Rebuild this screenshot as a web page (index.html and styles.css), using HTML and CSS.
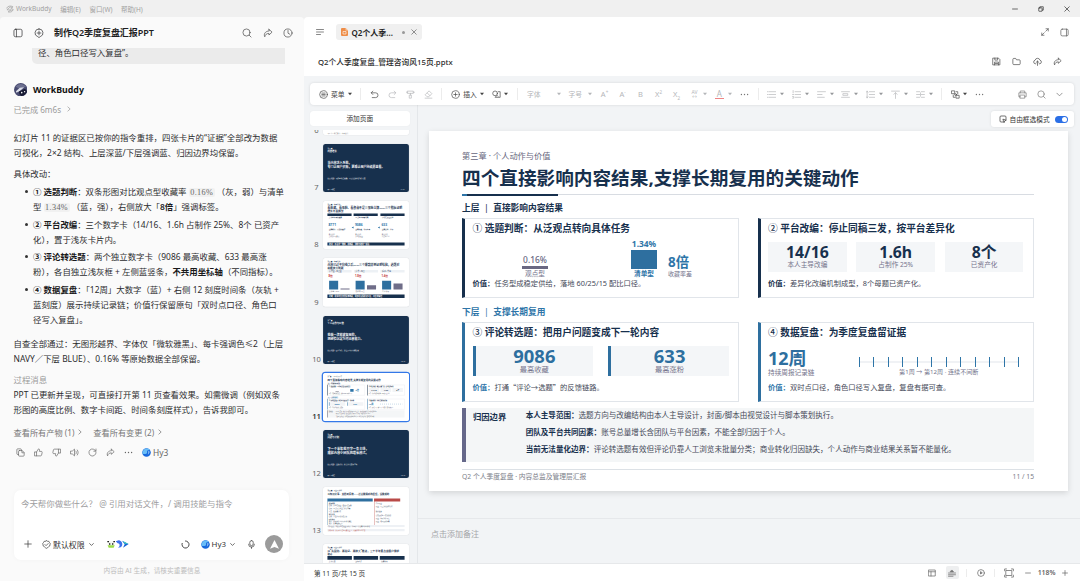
FILE: index.html
```html
<!DOCTYPE html>
<html lang="zh-CN">
<head>
<meta charset="utf-8">
<title>WorkBuddy</title>
<link rel="stylesheet" href="styles.css">
</head>
<body>
<svg class="defs" aria-hidden="true">
  <symbol id="i-side" viewBox="0 0 16 16"><rect x="1.5" y="2" width="13" height="12" rx="2.5"/><path d="M5.5 2v12"/></symbol>
  <symbol id="i-sider" viewBox="0 0 16 16"><rect x="1.5" y="2" width="13" height="12" rx="2.5"/><path d="M11.5 2v12"/></symbol>
  <symbol id="i-newchat" viewBox="0 0 16 16"><path d="M8 1.5a6.3 6.3 0 0 1 2 12.3L8 15.3l-2-1.5A6.3 6.3 0 0 1 8 1.5zM8 5v6M5 8h6"/></symbol>
  <symbol id="i-search" viewBox="0 0 16 16"><circle cx="7.2" cy="7.2" r="5.7"/><path d="M11.5 11.5l3 3"/></symbol>
  <symbol id="i-share" viewBox="0 0 16 16"><path d="M9.500 2l5 4.600-5 4.600V8.600C6 8.600 3.500 10.500 2.800 14 .8 9.500 3.500 5 9.500 4.700z"/></symbol>
  <symbol id="i-clock" viewBox="0 0 16 16"><circle cx="8" cy="8" r="6.500"/><path d="M8 4v4.300l3 1.700"/></symbol>
  <symbol id="i-chev" viewBox="0 0 16 16"><path d="M5 2.500l6 5.500-6 5.500"/></symbol>
  <symbol id="i-down" viewBox="0 0 16 16"><path d="M2 5l6 6 6-6"/></symbol>
  <symbol id="i-caret" viewBox="0 0 8 8"><path d="M0 1.500h8L4 6.500z" fill="currentColor" stroke="none"/></symbol>
  <symbol id="i-copy" viewBox="0 0 16 16"><path d="M4.500 11.500H3A1.500 1.500 0 0 1 1.500 10V3A1.500 1.500 0 0 1 3 1.500h5A1.500 1.500 0 0 1 9.500 3v1"/><path d="M6 4.500h5l3.500 3.500v5a1.500 1.500 0 0 1-1.500 1.500H6A1.500 1.500 0 0 1 4.500 13V6A1.500 1.500 0 0 1 6 4.500zM10.500 5v3.500H14"/></symbol>
  <symbol id="i-up" viewBox="0 0 16 16"><path d="M1.500 7h3v7h-3zM4.500 7L8 1.500c1.800 0 2.200 1.500 1.500 4.500H13c1 0 1.700.8 1.500 1.800l-1 4.700c-.2 1-.9 1.500-1.800 1.500H4.500"/></symbol>
  <symbol id="i-dn" viewBox="0 0 16 16"><path d="M14.500 9h-3V2h3zM11.500 9L8 14.500c-1.800 0-2.200-1.500-1.500-4.500H3c-1 0-1.700-.8-1.500-1.800l1-4.700C2.700 2.500 3.400 2 4.300 2h7.200"/></symbol>
  <symbol id="i-sound" viewBox="0 0 16 16"><path d="M1.500 5.500H4L8 2v12l-4-3.500H1.500zM10.500 5.500c1 1.500 1 3.500 0 5M13 3.500c2 2.700 2 6.300 0 9"/></symbol>
  <symbol id="i-retry" viewBox="0 0 16 16"><path d="M13.800 5.500A6.300 6.300 0 1 0 14.300 8M14.200 1.800v3.900h-3.900"/></symbol>
  <symbol id="i-dots" viewBox="0 0 16 16"><g fill="currentColor" stroke="none"><circle cx="2.500" cy="8" r="1.200"/><circle cx="8" cy="8" r="1.200"/><circle cx="13.500" cy="8" r="1.200"/></g></symbol>
  <symbol id="i-plus" viewBox="0 0 16 16"><path d="M8 1.500v13M1.500 8h13"/></symbol>
  <symbol id="i-minus" viewBox="0 0 16 16"><path d="M1.500 8h13"/></symbol>
  <symbol id="i-shield" viewBox="0 0 16 16"><path d="M8 1.200l1.900 1.100 2.300.1 1.100 2 1.400 1.900L14.200 8.500l-.6 2.300-2 1.200L10 13.700 8 14.800l-2-1.100L4.300 12l-2-1.200-.5-2.300L1.300 6.300l1.400-1.900 1.100-2 2.300-.1zM5.200 8l2 2 3.800-3.800"/></symbol>
  <symbol id="i-mic" viewBox="0 0 16 16"><rect x="5" y="1" width="6" height="9" rx="3"/><path d="M2.800 7.500a5.200 5.200 0 0 0 10.400 0M8 12.700V15"/></symbol>
  <symbol id="i-ring" viewBox="0 0 16 16"><path d="M8 1.700A6.300 6.300 0 1 1 2 6"/></symbol>
  <symbol id="i-x" viewBox="0 0 16 16"><path d="M2 2l12 12M14 2L2 14"/></symbol>
  <symbol id="i-restore" viewBox="0 0 16 16"><rect x="2" y="5" width="9" height="9" rx="1"/><path d="M5 5V2h9v9h-3"/></symbol>
  <symbol id="i-outline" viewBox="0 0 16 16"><path d="M1 3h14M1 8h14M1 13h8"/></symbol>
  <symbol id="i-expand" viewBox="0 0 16 16"><path d="M9.500 6.500l5-5M10 1.500h4.500V6M6.500 9.500l-5 5M1.500 10v4.500H6"/></symbol>
  <symbol id="i-save" viewBox="0 0 16 16"><path d="M2 2h9.500L14 4.500V14H2zM5 2v3.500h5V2M4.500 14V9h7v5M6 11.500h4"/></symbol>
  <symbol id="i-folder" viewBox="0 0 16 16"><path d="M1.500 4A1.500 1.500 0 0 1 3 2.500h3.500L8 5h5a1.500 1.500 0 0 1 1.500 1.500V12a1.500 1.500 0 0 1-1.500 1.500H3A1.500 1.500 0 0 1 1.500 12z"/></symbol>
  <symbol id="i-cloud" viewBox="0 0 16 16"><path d="M5 12H4a3.200 3.200 0 0 1-.3-6.300 4.500 4.500 0 0 1 8.700 0A3.200 3.200 0 0 1 12 12h-1M8 15V7.500M5.500 9.700L8 7.300l2.500 2.400"/></symbol>
  <symbol id="i-menu" viewBox="0 0 16 16"><circle cx="8" cy="8" r="6.800"/><path d="M5 5.500h6M5 8h6M5 10.500h6"/></symbol>
  <symbol id="i-undo" viewBox="0 0 16 16"><path d="M5 2L2 5l3 3M2.500 5H10a4 4 0 0 1 0 8.500H4"/></symbol>
  <symbol id="i-redo" viewBox="0 0 16 16"><path d="M11 2l3 3-3 3M13.500 5H6a4 4 0 0 0 0 8.500h6"/></symbol>
  <symbol id="i-paint" viewBox="0 0 16 16"><path d="M3 2h10v4H3zM13 4h2M1 4h2M8 6v3M6.500 9h3v5.500h-3z"/></symbol>
  <symbol id="i-erase" viewBox="0 0 16 16"><path d="M9.500 2L14 6.500 8.500 12H5.500L2.500 9zM6 5.500L10.500 10M2 14.500h12"/></symbol>
  <symbol id="i-add" viewBox="0 0 16 16"><circle cx="8" cy="8" r="6.800"/><path d="M8 5v6M5 8h6"/></symbol>
  <symbol id="i-shape" viewBox="0 0 16 16"><circle cx="5.500" cy="6" r="4.200"/><path d="M11 3h3.500v10h-9l3.500-3.500 1.500 1.500"/></symbol>
  <symbol id="i-list" viewBox="0 0 16 16"><path d="M0 3h2M4 3h12M0 8h2M4 8h12M0 13h2M4 13h12"/></symbol>
  <symbol id="i-num" viewBox="0 0 16 16"><path d="M2 1v4M1 8h2M1 11.500h2v3H1M5.500 3H16M5.500 8H16M5.500 13H16"/></symbol>
  <symbol id="i-left" viewBox="0 0 16 16"><path d="M1 3h14M1 8h8M1 13h12"/></symbol>
  <symbol id="i-center" viewBox="0 0 16 16"><path d="M1 3h14M4 6.500h8v3H4zM1 13h14"/></symbol>
  <symbol id="i-space" viewBox="0 0 16 16"><path d="M2 2v12M0.500 4L2 2l1.500 2M.5 12L2 14l1.500-2M6 3h10M6 8h10M6 13h10"/></symbol>
  <symbol id="i-top" viewBox="0 0 16 16"><path d="M1 2h14M8 5v10M5 7.500L8 5l3 2.500"/></symbol>
  <symbol id="i-cols" viewBox="0 0 16 16"><path d="M1 3h5.500M9.500 3H15M1 8h5.500M9.500 8H15M1 13h5.500M9.500 13H15M8 5v6"/></symbol>
  <symbol id="i-swap" viewBox="0 0 16 16"><path d="M1.500 1.500h5v5h-5zM9.500 9.500h5v5h-5zM9 3h3v4M4 9v4h3"/><circle cx="8" cy="8" r="1.600"/></symbol>
  <symbol id="i-print" viewBox="0 0 16 16"><path d="M4 5V1.800h8V5M4 12H1.500V5h13v7H12M4 9h8v5.500H4z"/></symbol>
  <symbol id="i-select" viewBox="0 0 16 16"><path d="M8 14H4a2 2 0 0 1-2-2V4a2 2 0 0 1 2-2h8a2 2 0 0 1 2 2v5M8.500 8.500l6 2-3 1.200-1.200 3z"/></symbol>
  <symbol id="i-layout" viewBox="0 0 16 16"><path d="M1.500 2h13v12h-13zM1.500 5.500h13M6 5.500V14"/></symbol>
  <symbol id="i-notes" viewBox="0 0 16 16"><path d="M1 8h14M1 11.500h14M1 14.500h9"/><path d="M5 5.500h6L8 2.500z" fill="currentColor"/></symbol>
  <symbol id="i-play" viewBox="0 0 16 16"><circle cx="8" cy="8" r="6.800"/><path d="M7 6v4l3-2z" fill="currentColor"/></symbol>
  <symbol id="i-fit" viewBox="0 0 16 16"><path d="M1 4.500V1.500h3M12 1.500h3v3M15 11.500v3h-3M4 14.500H1v-3M3.500 4h9v8h-9z"/></symbol>
  <symbol id="i-hy" viewBox="0 0 16 16"><circle cx="8" cy="8" r="7.600" fill="#1768dc" stroke="none"/><path d="M2 5C4 0 12-.5 14.500 4c-4-2-6 1-5.500 3.500S5 12 1 10C.3 8 1 6 2 5z" fill="#69bdf7" stroke="none"/><path d="M12 4.500c2 2 1.500 6-2 7.500 3-3 .5-5 2-7.500z" fill="#cdeaff" stroke="none"/></symbol>
</svg>

<header class="titlebar">
  <svg class="ic s8 logo" viewBox="0 0 16 16"><path d="M1.500 6C3 2 8 1 13.500 3M2.500 9l6-5 5 1.500-6 4zM5 14c3 1 8 0 9.500-5L9 11z"/></svg>
  <span class="brand">WorkBuddy</span><span>编辑(E)</span><span>窗口(W)</span><span>帮助(H)</span>
  <div class="win"><svg class="ic s6"><use href="#i-minus"/></svg><svg class="ic s6"><use href="#i-restore"/></svg><svg class="ic s6"><use href="#i-x"/></svg></div>
</header>

<div class="app">
<aside class="chat">
  <div class="chat-head">
    <svg class="ic s10"><use href="#i-side"/></svg><svg class="ic s10"><use href="#i-newchat"/></svg>
    <h1>制作Q2季度复盘汇报PPT</h1>
    <div class="head-tools"><svg class="ic s10"><use href="#i-search"/></svg><svg class="ic s10"><use href="#i-share"/></svg><svg class="ic s10"><use href="#i-clock"/></svg></div>
  </div>
  <div class="bubble">径、角色口径写入复盘”。</div>
  <div class="agent">
    <svg class="avatar" viewBox="0 0 28 28"><circle cx="14" cy="14" r="14" fill="#474a70"/><path d="M3 8C8 0 20 0 25 8L12 12z" fill="#6d7090"/><path d="M4 17l8-7 9-1-8 7-8 4z" fill="#dcdfea"/><path d="M11 17l12-5 4 5c-2 7-7 10-12 10-3-2-5-6-4-10z" fill="#171a33"/><circle cx="16" cy="20" r="1.600" fill="#fff"/><circle cx="22" cy="18" r="1.400" fill="#fff"/></svg>
    <b>WorkBuddy</b>
  </div>
  <div class="done">已完成 6m6s <svg class="ic s6"><use href="#i-chev"/></svg></div>
  <div class="msg">
    <p>幻灯片 11 的证据区已按你的指令重排，四张卡片的“证据”全部改为数据<br>可视化，2×2 结构、上层深蓝/下层强调蓝、归因边界均保留。</p>
    <p class="gap6">具体改动：</p>
    <ul>
      <li><b>① 选题判断</b>：双条形图对比观点型收藏率 <code>0.16%</code> （灰，弱）与清单<br>型 <code>1.34%</code> （蓝，强），右侧放大「<b>8倍</b>」强调标签。</li>
      <li><b>② 平台改编</b>：三个数字卡（14/16、1.6h 占制作 25%、8个 已资产<br>化），置于浅灰卡片内。</li>
      <li><b>③ 评论转选题</b>：两个独立数字卡（9086 最高收藏、633 最高涨<br>粉），各自独立浅灰框 + 左侧蓝竖条，<b>不共用坐标轴</b>（不同指标）。</li>
      <li><b>④ 数据复盘</b>：「12周」大数字（蓝）+ 右侧 12 刻度时间条（灰轨 +<br>蓝刻度）展示持续记录链；价值行保留原句「双时点口径、角色口<br>径写入复盘」。</li>
    </ul>
    <p class="gap9">自查全部通过：无图形越界、字体仅「微软雅黑」、每卡强调色≤2（上层<br>NAVY／下层 BLUE）、0.16% 等原始数据全部保留。</p>
    <p class="gap6 muted">过程消息</p>
    <p>PPT 已更新并呈现，可直接打开第 11 页查看效果。如需微调（例如双条<br>形图的高度比例、数字卡间距、时间条刻度样式），告诉我即可。</p>
  </div>
  <div class="links"><span>查看所有产物 (1) <svg class="ic s6"><use href="#i-chev"/></svg></span><span>查看所有变更 (2) <svg class="ic s6"><use href="#i-chev"/></svg></span></div>
  <div class="acts">
    <svg class="ic s9"><use href="#i-copy"/></svg><svg class="ic s9"><use href="#i-up"/></svg><svg class="ic s9"><use href="#i-dn"/></svg><svg class="ic s9"><use href="#i-sound"/></svg><svg class="ic s9"><use href="#i-retry"/></svg><svg class="ic s9"><use href="#i-share"/></svg><svg class="ic s9"><use href="#i-dots"/></svg>
    <span class="model"><svg class="ic s9"><use href="#i-hy"/></svg>Hy3</span>
  </div>
  <div class="composer">
    <div class="ph">今天帮你做些什么？ @ 引用对话文件，/ 调用技能与指令</div>
    <div class="comp-bar">
      <svg class="ic s8"><use href="#i-plus"/></svg>
      <span class="perm"><svg class="ic s9"><use href="#i-shield"/></svg>默认权限<svg class="ic s5"><use href="#i-down"/></svg></span>
      <svg class="skills" viewBox="0 0 66 24"><path d="M3 7c5-4 14-4 19 0l1 11H2z" fill="#f2f5ee"/><path d="M1 3h5v4H1zM19 3h5v4h-5z" fill="#222"/><path d="M6 10h4v4H6zM15 10h4v4h-4z" fill="#222"/><path d="M2 16h21l-3 7H5z" fill="#9adb48"/><path d="M26 4l9-3c11 0 15 17 6 21l-8 1c8-4 5-14-1-13z" fill="#3d72ec"/><path d="M45 2l20 10-17 11 5-10z" fill="#1764d8"/><path d="M48 3l16 9-11-1z" fill="#37cbbd"/></svg>
      <span class="push"></span>
      <svg class="ic s9 thick"><use href="#i-ring"/></svg>
      <span class="pick"><svg class="ic s9"><use href="#i-hy"/></svg>Hy3<svg class="ic s5"><use href="#i-down"/></svg></span>
      <svg class="ic s9 mic"><use href="#i-mic"/></svg>
      <span class="send"><svg viewBox="0 0 16 16"><path d="M8 1.500L14.500 14 8 11.500 1.500 14z" fill="#fff"/></svg></span>
    </div>
  </div>
  <div class="disclaimer">内容由 AI 生成，请核实重要信息</div>
</aside>

<main class="doc">
  <div class="tabs">
    <svg class="ic s8"><use href="#i-outline"/></svg>
    <div class="tab"><svg class="ppt" viewBox="0 0 14 16"><path d="M2 0h7l5 5v9a2 2 0 0 1-2 2H2a2 2 0 0 1-2-2V2a2 2 0 0 1 2-2z" fill="#ee8d48"/><path d="M9 0l5 5H9z" fill="#f8c79f"/><path d="M4 7h6v5H4z" fill="none" stroke="#fff" stroke-width="1.200"/></svg><b>Q2个人季...</b><i class="dot"></i><svg class="ic s6"><use href="#i-x"/></svg></div>
    <span class="push"></span>
    <svg class="ic s8"><use href="#i-expand"/></svg><svg class="ic s9"><use href="#i-sider"/></svg>
  </div>
  <div class="filebar">
    <span>Q2个人季度复盘_管理咨询风15页.pptx</span>
    <svg class="ic s9"><use href="#i-save"/></svg><svg class="ic s9"><use href="#i-folder"/></svg><svg class="ic s9"><use href="#i-cloud"/></svg><svg class="ic s9"><use href="#i-share"/></svg>
  </div>
  <div class="editor">
    <div class="toolbar">
      <span class="tg dark"><svg class="ic s9"><use href="#i-menu"/></svg><span class="tl">菜单</span><svg class="ic car"><use href="#i-caret"/></svg></span><i class="sep"></i>
      <span class="tg wide"><svg class="ic s9 dark"><use href="#i-undo"/></svg><svg class="ic s9"><use href="#i-redo"/></svg><svg class="ic s9"><use href="#i-paint"/></svg><svg class="ic s9"><use href="#i-erase"/></svg></span><i class="sep"></i>
      <span class="tg dark"><svg class="ic s9"><use href="#i-add"/></svg><span class="tl">插入</span><svg class="ic car"><use href="#i-caret"/></svg><svg class="ic s9 shp"><use href="#i-shape"/></svg><svg class="ic car"><use href="#i-caret"/></svg></span><i class="sep"></i>
      <span class="tg font"><span class="tl">字体</span><svg class="ic car"><use href="#i-caret"/></svg></span>
      <span class="tg size"><span class="tl">字号</span><svg class="ic car"><use href="#i-caret"/></svg></span>
      <span class="tg glyphs"><span>A<sup>+</sup></span><span>A<sup>-</sup></span><span>B</span><span>X<sup>2</sup></span><span>X<sub>2</sub></span></span>
      <span class="tg pair"><span class="av">AV<br>↔</span><svg class="ic car"><use href="#i-caret"/></svg></span>
      <span class="tg pair"><span class="fc">A</span><svg class="ic car"><use href="#i-caret"/></svg></span>
      <svg class="ic s9 mid more"><use href="#i-dots"/></svg><i class="sep"></i>
      <span class="tg paras">
        <span class="pp"><svg class="ic s9"><use href="#i-list"/></svg><svg class="ic car"><use href="#i-caret"/></svg></span>
        <span class="pp"><svg class="ic s9"><use href="#i-num"/></svg><svg class="ic car"><use href="#i-caret"/></svg></span>
        <span class="pp"><svg class="ic s9"><use href="#i-left"/></svg><svg class="ic car"><use href="#i-caret"/></svg></span>
        <span class="pp"><svg class="ic s9"><use href="#i-center"/></svg><svg class="ic car"><use href="#i-caret"/></svg></span>
        <span class="pp"><svg class="ic s9"><use href="#i-space"/></svg><svg class="ic car"><use href="#i-caret"/></svg></span>
        <span class="pp"><svg class="ic s9"><use href="#i-top"/></svg><svg class="ic car"><use href="#i-caret"/></svg></span>
        <span class="pp"><svg class="ic s9"><use href="#i-cols"/></svg><svg class="ic car"><use href="#i-caret"/></svg></span>
      </span><i class="sep"></i>
      <span class="tg dark swap"><svg class="ic s9"><use href="#i-swap"/></svg><svg class="ic car"><use href="#i-caret"/></svg></span>
      <svg class="ic s9 mid"><use href="#i-dots"/></svg>
      <span class="push"></span>
      <span class="tg tools mid"><svg class="ic s9"><use href="#i-print"/></svg><svg class="ic s9"><use href="#i-search"/></svg><svg class="ic s7"><use href="#i-down"/></svg></span>
    </div>
    <div class="work">
      <nav class="pages">
        <div class="addpage">添加页面</div>
        <div class="scroll"><ol class="thumbs">
          <li><span>6</span><svg viewBox="0 0 256 144"><rect width="256" height="144" fill="#fff"/><text x="14" y="139" font-size="5" fill="#999">Q2 个人季度复盘 · 内容总监</text></svg></li>
          <li class="navy"><span>7</span><svg viewBox="0 0 256 144"><rect width="256" height="144" fill="#17304d"/><g fill="#fff"><text x="13" y="16" font-size="5">第二章</text><text x="13" y="24" font-size="7" font-weight="700">内容增长</text><text x="13" y="59" font-size="9" font-weight="700">当内容进入系统，</text><text x="13" y="71" font-size="9" font-weight="700">专门让用户买账，更难让用户持续愿意看。</text><text x="13" y="103" font-size="5">核心判断：不追求单点爆款，而是用结构化动作沉淀</text><text x="13" y="138" font-size="4">Q2 个人季度</text><text x="232" y="138" font-size="4">7 / 15</text></g></svg></li>
          <li><span>8</span><svg viewBox="0 0 256 144"><rect width="256" height="144" fill="#fff"/><g fill="#17304d"><text x="13" y="13" font-size="5">第二章 · 内容增长</text><text x="13" y="23" font-size="8.600" font-weight="700">看收藏、看涨粉、看咨询不是三张独立牌——三个指标证明</text><text x="13" y="32" font-size="8" font-weight="700">增长不靠偶然</text><path d="M13 37h72v8H13zM91 37h72v8H91zM171 37h72v8h-72zM13 124h230v9H13z"/><g font-size="5"><text x="17" y="52">清单型内容收藏高</text><text x="96" y="52">观点型内容曝光高</text><text x="175" y="52">评论转选题涨粉</text><text x="17" y="87">最高播放，贡献收藏率</text><text x="96" y="87">最高收藏，单条内容</text><text x="175" y="87">最高涨粉，单条</text></g><g font-size="4.500" fill="#667"><text x="17" y="100">复用结论</text><text x="17" y="107">清单结构可复用</text><text x="96" y="100">复用结论</text><text x="96" y="107">评论做选题</text><text x="175" y="100">复用结论</text><text x="175" y="107">沉淀为系列</text></g></g><g fill="#2e75a8" font-size="10" font-weight="700"><text x="16" y="76">8771</text><text x="95" y="76">9086</text><text x="174" y="76">633</text></g><path d="M85 79l6-3v6zM163 79l6-3v6z" fill="#2e75a8"/><text x="18" y="131" font-size="5.500" fill="#fff" font-weight="700">结论：不看单一播放，用收藏、涨粉与转化一起看</text></svg></li>
          <li><span>9</span><svg viewBox="0 0 256 144"><rect width="256" height="144" fill="#fff"/><g fill="#17304d"><text x="13" y="13" font-size="5">第二章 · 内容增长</text><text x="13" y="23" font-size="8.600" font-weight="700">内容已过平均线之后——三个爆款样例证明结构，选题对</text><text x="13" y="32" font-size="8" font-weight="700">就能放大收藏</text><path d="M13 109h230v10H13z"/></g><path d="M13 36h72v7H13zM92 36h72v7H92zM171 36h72v7h-72z" fill="#edf1f5"/><g font-size="5.500" fill="#17304d"><text x="18" y="42">清单型 / 观点型</text><text x="97" y="42">清单 / 观点</text><text x="176" y="42">系列 / 单条</text></g><g fill="#c23b3b" font-size="8" font-weight="700"><text x="16" y="56">8倍</text><text x="95" y="56">1.8倍</text><text x="174" y="56">1.4倍</text></g><path d="M18 68h27v26H18zM97 68h27v26H97zM176 68h27v26h-27z" fill="#2e6f9f"/><path d="M52 91h27v3H52zM131 81h27v13h-27zM210 76h27v18h-27z" fill="#6f6d88"/><g font-size="5" fill="#556"><text x="18" y="100">清单型 1.34%</text><text x="97" y="100">有标签 观点</text><text x="176" y="100">系列 单条</text></g><text x="18" y="117" font-size="5.500" fill="#fff" font-weight="700">判断：用清单型选题提高收藏，用评论反馈验证价值，不追求爆款</text></svg></li>
          <li class="navy"><span>10</span><svg viewBox="0 0 256 144"><rect width="256" height="144" fill="#17304d"/><g fill="#fff"><text x="13" y="16" font-size="5">第三章</text><text x="13" y="24" font-size="7" font-weight="700">个人动作与价值</text><text x="13" y="60" font-size="9" font-weight="700">我做一次能被复用的，</text><text x="13" y="72" font-size="9" font-weight="700">把经验沉淀为可迁移能力。</text><text x="13" y="103" font-size="5">核心判断：四个动作，分上下两层支撑结果</text><text x="13" y="138" font-size="4">Q2 个人季度</text><text x="232" y="138" font-size="4">10 / 15</text></g></svg></li>
          <li class="active"><span>11</span><svg viewBox="0 0 256 144"><rect width="256" height="144" fill="#fff"/><path d="M13 111h2v22h-2z" fill="#667"/><path d="M15 111h228v22H15z" fill="#f4f6f7"/><path d="M136 45h31v12h-31zM171 45h32v12h-32zM207 45h31v12h-31zM19 87h47v11H19zM73 87h47v11H73z" fill="#f2f4f6"/><g fill="#17304d"><text x="13" y="12" font-size="4">第三章 · 个人动作与价值</text><text x="13" y="23" font-size="7.500" font-weight="700">四个直接影响内容结果,支撑长期复用的关键动作</text><text x="13" y="33" font-size="3.500" font-weight="700">上层 | 直接影响内容结果</text><text x="18" y="42" font-size="3.900" font-weight="700">① 选题判断：从泛观点转向具体任务</text><text x="136" y="42" font-size="3.900" font-weight="700">② 平台改编：停止同稿三发，按平台差异化</text><text x="18" y="84" font-size="3.900" font-weight="700">③ 评论转选题：把用户问题变成下一轮内容</text><text x="136" y="84" font-size="3.900" font-weight="700">④ 数据复盘：为季度复盘留证据</text><g font-size="6.200" font-weight="700"><text x="143" y="54">14/16</text><text x="181" y="54">1.6h</text><text x="218" y="54">8个</text></g><g font-size="3" fill="#445"><text x="18" y="63">价值：任务型成稳定供给，落地 60/25/15 配比口径。</text><text x="136" y="63">价值：差异化改编机制成型，8个母题已资产化。</text><text x="18" y="105">价值：打通评论选题的反馈链路</text><text x="136" y="105">价值：双时点口径，角色口径写入复盘，复盘有据可查。</text><text x="17" y="116" font-weight="700">归因边界</text><text x="38" y="116">本人主导范围：选题方向与改编结构由本人主导设计，封面/脚本由视觉设计与脚本策划执行。</text><text x="38" y="123">团队及平台共同因素：账号总量增长含团队与平台因素，不能全部归因于个人。</text><text x="38" y="130">当前无法量化边界：评论转选题有效但评论仍靠人工浏览未批量分类；商业转化归因缺失</text></g></g><g fill="#2e75a8"><text x="13" y="75" font-size="3.500" font-weight="700">下层 | 支撑长期复用</text><path d="M81 48h10v8H81zM13 77h1.500v32H13zM131 77h1.500v32H131zM17.500 87h1.500v11h-1.500zM71.500 87h1.500v11h-1.500z"/><g font-size="6.500" font-weight="700"><text x="97" y="55">8倍</text><text x="34" y="94">9086</text><text x="90" y="94">633</text><text x="136" y="95">12周</text></g><path d="M172 93h64" stroke="#2e75a8" stroke-dasharray=".6 5.200" stroke-width="4"/></g><path d="M13 35h1.500v32H13zM131 35h1.500v32H131z" fill="#17304d"/><path d="M14.500 35.500H124v31H14.500M132.500 35.500H243v31H132.500M14.500 77.500H124v31H14.500M132.500 77.500H243v31H132.500" fill="none" stroke="#e1e5ea"/><path d="M37 54h10v1.500H37z" fill="#667"/></svg></li>
          <li class="navy"><span>12</span><svg viewBox="0 0 256 144"><rect width="256" height="144" fill="#17304d"/><g fill="#fff"><text x="13" y="16" font-size="5">第四章</text><text x="13" y="24" font-size="7" font-weight="700">问题与计划</text><text x="13" y="59" font-size="9.500" font-weight="700">下一个半年我只守一条主线，</text><text x="13" y="71" font-size="9.500" font-weight="700">成就内容小团队的增长模式。</text><text x="13" y="103" font-size="5">核心判断：先做减法，把方法沉淀为系统</text><text x="13" y="138" font-size="4">Q2 个人季度</text><text x="232" y="138" font-size="4">12 / 15</text></g></svg></li>
          <li><span>13</span><svg viewBox="0 0 256 144"><rect width="256" height="144" fill="#fff"/><g fill="#17304d"><text x="13" y="12" font-size="5">第四章 · 问题与计划</text><text x="13" y="23" font-size="7.100" font-weight="700">从知识分享、文档到系统——过去做得对的保留，没做成的</text></g><path d="M13 34h135v9H13zM13 43h1v70h-1z" fill="#2e6f9f"/><path d="M152 34h78v9h-78zM152 43h1v70h-1z" fill="#b94a48"/><g font-size="4.600" fill="#3c4e64"><text x="17" y="51" font-weight="700">选题机制</text><text x="17" y="58">保留：评论转选题，每周固定更新</text><text x="17" y="66">保留：观点与清单组合发布节奏</text><text x="17" y="74">沉淀：数据复盘表</text><text x="17" y="82" font-weight="700">平台分发</text><text x="17" y="89">保留：平台差异化改编方案</text><text x="17" y="97" font-weight="700">团队协同</text><text x="17" y="104">推进：脚本协作流程及标准化模板</text><text x="17" y="111">推进：共享数据口径</text><text x="157" y="51">归因问题</text><text x="157" y="60">问题：人工分类效率较低</text><text x="157" y="74">缺失数据</text><text x="157" y="86">没有形成统一转化追踪</text><text x="157" y="95">问题：协同动作不足</text><text x="157" y="103">问题：跨团队成本高</text></g><path d="M13 113h230v6H13zM13 125h230v7H13z" fill="#eef1f5"/><text x="15" y="118" font-size="4.500" fill="#556">归因边界：当前评论转选题已验证，仍需进一步提高流程标准化</text><text x="15" y="131" font-size="4.500" fill="#b94a48">判断标准：把经验沉淀为可复用资产，明确半年主线任务</text></svg></li>
          <li><span></span><svg viewBox="0 0 256 144"><rect width="256" height="144" fill="#fff"/><g fill="#17304d"><text x="13" y="12" font-size="5">第四章 · 问题与计划</text><text x="13" y="23" font-size="8" font-weight="700">以“先固化、再验证、再放大”推进，三个半年重点由客户需求</text><text x="13" y="32" font-size="7" font-weight="700">驱动</text><path d="M13 36h73v11H13zM91 36h73v11H91zM169 36h74v11h-74z"/><g font-size="5"><text x="17" y="55">方法沉淀</text><text x="95" y="55">实验验证</text><text x="173" y="55">规模放大</text></g></g></svg></li>
        </ol></div>
      </nav>
      <section class="canvas">
        <div class="mode"><svg class="ic s8"><use href="#i-select"/></svg>自由框选模式<i class="toggle"></i></div>
        <article class="slide">
          <div class="chapter">第三章 · 个人动作与价值</div>
          <h2>四个直接影响内容结果,支撑长期复用的关键动作</h2>
          <div class="rule"><i></i></div>
          <div class="layer">上层 <em>|</em> 直接影响内容结果</div>
          <div class="row">
            <div class="card">
              <h3><span class="n">①</span> 选题判断：从泛观点转向具体任务</h3>
              <div class="mid-area chart">
                <div class="col weak"><span>0.16%</span><i></i><small>观点型</small></div>
                <div class="col strong"><b>1.34%</b><i></i><small>清单型</small></div>
                <div class="times"><b>8倍</b><small>收藏率差</small></div>
              </div>
              <p><b>价值：</b>任务型成稳定供给，落地 60/25/15 配比口径。</p>
            </div>
            <div class="card">
              <h3><span class="n">②</span> 平台改编：停止同稿三发，按平台差异化</h3>
              <div class="mid-area boxes"><div><b>14/16</b><small>本人主导改编</small></div><div><b>1.6h</b><small>占制作 25%</small></div><div><b>8个</b><small>已资产化</small></div></div>
              <p><b>价值：</b>差异化改编机制成型，8个母题已资产化。</p>
            </div>
          </div>
          <div class="layer blue">下层 <em>|</em> 支撑长期复用</div>
          <div class="row lower">
            <div class="card">
              <h3><span class="n">③</span> 评论转选题：把用户问题变成下一轮内容</h3>
              <div class="mid-area boxes two"><div><b>9086</b><small>最高收藏</small></div><div><b>633</b><small>最高涨粉</small></div></div>
              <p><b>价值：</b><span class="cjk">打通“评论→选题”的反馈链路。</span></p>
            </div>
            <div class="card">
              <h3><span class="n">④</span> 数据复盘：为季度复盘留证据</h3>
              <div class="mid-area weeks">
                <div class="wk"><b>12周</b><small>持续周报记录链</small></div>
                <div class="tl-box"><div class="ticks"><i></i><i></i><i></i><i></i><i></i><i></i><i></i><i></i><i></i><i></i><i></i><i></i></div><small>第1周 <span class="cjk">→</span> 第12周 · 连续不间断</small></div>
              </div>
              <p><b>价值：</b>双时点口径，角色口径写入复盘，复盘有据可查。</p>
            </div>
          </div>
          <div class="bound">
            <b class="bt">归因边界</b>
            <div><p><b>本人主导范围：</b>选题方向与改编结构由本人主导设计，封面/脚本由视觉设计与脚本策划执行。</p><p><b>团队及平台共同因素：</b>账号总量增长含团队与平台因素，不能全部归因于个人。</p><p><b>当前无法量化边界：</b>评论转选题有效但评论仍靠人工浏览未批量分类；商业转化归因缺失，个人动作与商业结果关系暂不能量化。</p></div>
          </div>
          <footer><span>Q2 个人季度复盘 · 内容总监及管理层汇报</span><span>11 / 15</span></footer>
        </article>
        <div class="notes">点击添加备注</div>
      </section>
    </div>
    <div class="status">
      <span>第 11 页/共 15 页</span><span class="push"></span>
      <svg class="ic s8"><use href="#i-layout"/></svg><span class="on"><svg class="ic s8"><use href="#i-notes"/></svg></span><i class="sep"></i><svg class="ic s8"><use href="#i-play"/></svg><i class="sep"></i><svg class="ic s10"><use href="#i-fit"/></svg><svg class="ic s6 zo"><use href="#i-minus"/></svg><b>118%</b><svg class="ic s6"><use href="#i-plus"/></svg>
    </div>
  </div>
</main>
</div>
</body>
</html>
```
FILE: styles.css
```css
* { box-sizing: border-box; margin: 0; padding: 0; }
body {
  width: 1080px; height: 581px; overflow: hidden;
  background: #f0f0f0; color: #2c2c2e;
  font-family: "Noto Sans", "Noto Sans CJK SC", sans-serif;
  font-size: 8.42px; white-space: nowrap;
  display: flex; flex-direction: column;
}
i, em { font-style: normal; display: inline-block; }
.defs { position: absolute; width: 0; height: 0; }
.ic { fill: none; stroke: currentColor; stroke-width: 1.2; stroke-linecap: round; stroke-linejoin: round; flex: none; display: block; }
.s5 { width: 5px; height: 5px; stroke-width: 2.2; }
.s6 { width: 6px; height: 6px; stroke-width: 1.9; }
.s7 { width: 7px; height: 7px; stroke-width: 1.7; }
.s8 { width: 8px; height: 8px; stroke-width: 1.4; }
.s9 { width: 9px; height: 9px; stroke-width: 1.2; }
.s10 { width: 10px; height: 10px; }
.thick { stroke-width: 1.6; }
.push { flex: 1; }
.cjk { font-family: "Noto Sans CJK SC", sans-serif; }

/* window title bar */
.titlebar { height: 17px; flex: none; display: flex; align-items: center; padding: 0 10px 0 6px; font-size: 6.500px; color: #a0a0a0; }
.titlebar > span { margin-right: 8.700px; }
.titlebar .logo { margin-right: 2px; }
.win { margin-left: auto; display: flex; gap: 20px; color: #333; }
.app { flex: 1; display: flex; min-height: 0; }

/* conversation */
.chat { width: 304px; flex: none; background: #fafafa; border-radius: 4px 4px 0 0; display: flex; flex-direction: column; }
.chat-head { height: 31px; flex: none; display: flex; align-items: center; padding: 0 11px 0 13px; gap: 10.500px; color: #3c3c3e; }
.chat-head h1 { font-size: 9px; font-weight: 600; color: #1d1d1f; letter-spacing: -.05px; }
.head-tools { margin-left: auto; display: flex; gap: 10.500px; color: #555; }
.bubble { margin: 0 19px 0 32px; height: 16px; flex: none; background: #ebebeb; border-radius: 0 0 0 5px; padding-left: 6px; line-height: 10px; }
.agent { margin: 18px 0 0 13.500px; height: 15px; flex: none; display: flex; align-items: center; gap: 6px; font-size: 8.800px; color: #111; }
.avatar { width: 13.500px; height: 13.500px; }
.done { margin: 5.500px 0 0 13.500px; height: 13px; flex: none; display: flex; align-items: center; gap: 5px; font-size: 8.200px; color: #9a9a9a; }
.msg { margin: 14.500px 0 0 13.500px; line-height: 15px; flex: none; }
.msg b { font-weight: 600; color: #19191b; }
.gap6 { margin-top: 6px; }
.gap9 { margin-top: 9px; }
.msg .muted { color: #9a9a9a; }
.msg ul { list-style: none; margin-top: 3px; padding-left: 19.500px; display: flex; flex-direction: column; gap: 2.500px; }
.msg li::before { content: ""; float: left; width: 3px; height: 3px; border-radius: 50%; background: #333; margin: 6px 0 0 -8px; }
.msg code { font-family: "Liberation Serif", serif; background: #f1f1f1; padding: 0 1.500px; border-radius: 2px; color: #666; font-size: 8.200px; letter-spacing: .35px; line-height: 10px; }
.links { margin: 9.500px 0 0 13.500px; height: 11px; flex: none; display: flex; gap: 10px; color: #777; }
.links span { display: flex; align-items: center; gap: 3px; font-size: 8.200px; }
.acts { margin: 9px 0 0 15.500px; height: 12px; flex: none; display: flex; align-items: center; gap: 9px; color: #666; }
.model { display: flex; align-items: center; gap: 2.500px; font-size: 8.400px; }
.composer { margin: 31.500px 15px 0 14px; height: 70px; flex: none; background: #fff; border-radius: 7px; box-shadow: 0 0 5px rgba(0,0,0,.03); display: flex; flex-direction: column; justify-content: space-between; padding: 7px 6px 6px 7px; }
.ph { color: #9c9c9e; height: 13px; line-height: 13px; font-size: 8.450px; }
.comp-bar { height: 19px; display: flex; align-items: center; color: #333; padding-left: 2.500px; font-size: 7.900px; }
.perm { display: flex; align-items: center; gap: 2.500px; margin-left: 10px; }
.perm .s5, .pick .s5 { margin-left: 2px; }
.skills { width: 22px; height: 8px; margin-left: 13px; }
.pick { display: flex; align-items: center; gap: 2px; margin-left: 11px; }
.mic { margin: 0 9px 0 12px; }
.send { width: 18px; height: 18px; border-radius: 50%; background: #9b9b9b; display: flex; align-items: center; justify-content: center; }
.send svg { width: 11px; height: 11px; }
.disclaimer { margin-top: 5px; text-align: center; font-size: 6.700px; line-height: 12px; color: #bdbdbd; }

/* document area */
.doc { flex: 1; min-width: 0; background: #fff; border-radius: 4px 0 0 0; display: flex; flex-direction: column; }
.tabs { height: 30px; flex: none; display: flex; align-items: center; padding: 0 11px 0 12px; color: #555; }
.tabs .s9 { margin-left: 11.500px; }
.tab { margin-left: 12px; width: 86px; height: 16px; border-radius: 3px; background: #f0f0f0; display: flex; align-items: center; padding: 0 5px; color: #666; font-size: 8px; }
.tab b { font-weight: 600; color: #222; margin-left: 3.500px; }
.ppt { width: 7px; height: 8px; }
.dot { width: 3px; height: 3px; border-radius: 50%; background: #999; margin: 0 6px 0 auto; }
.filebar { height: 29px; flex: none; display: flex; align-items: center; padding: 0 18px 0 14px; gap: 11.500px; color: #444; }
.filebar span { flex: 1; font-size: 7.750px; font-weight: 500; color: #2a2a2a; }
.editor { flex: 1; min-height: 0; background: #f2f4f6; display: flex; flex-direction: column; }
.toolbar { margin: 7px 6px 0; height: 22px; flex: none; background: #fff; border-radius: 4px; box-shadow: 0 0 3px rgba(0,0,0,.12); display: flex; align-items: center; color: #b4b6b9; padding: 0 11.500px 0 8.500px; position: relative; z-index: 1; }
.tg { display: flex; align-items: center; gap: 3.500px; flex: none; }
.tl { font-size: 6.800px; }
.dark { color: #444; }
.mid { color: #777; }
.car { width: 4px; height: 4px; }
.sep { width: 1px; height: 12px; background: #ececec; flex: none; margin: 0 8.400px; }
.wide { gap: 9px; }
.tools { gap: 9.600px; }
.shp { margin-left: 4px; }
.font { width: 34px; justify-content: space-between; margin-left: 1px; }
.size { width: 23px; justify-content: space-between; margin-left: 7.500px; }
.glyphs { margin-left: 4px; gap: 0; font-size: 7.500px; }
.glyphs span { width: 18px; text-align: center; line-height: 12px; }
.glyphs sup, .glyphs sub { font-size: 4.500px; line-height: 0; }
.pair { width: 17px; justify-content: space-between; margin-left: 4.500px; }
.pair + .pair { margin-left: 7.700px; }
.av { font-size: 5px; line-height: 4.500px; width: 9px; text-align: center; }
.fc { font-size: 8px; line-height: 9px; width: 9px; text-align: center; border-bottom: 1.500px solid #ee8585; }
.more { margin-left: 8.500px; }
.paras { gap: 7.800px; }
.pp { width: 17px; display: flex; align-items: center; justify-content: space-between; }
.paras .car { color: #96989b; }
.swap { margin-right: 8px; }
.work { flex: 1; min-height: 0; display: flex; }
.pages { width: 113.500px; flex: none; border-right: 1px solid #e4e7ea; padding: 6px 7px 0 6px; display: flex; flex-direction: column; }
.addpage { height: 15px; flex: none; background: #fff; border-radius: 3px; font-size: 6.700px; line-height: 15px; text-align: center; color: #333; box-shadow: 0 0 1px rgba(0,0,0,.1); }
.scroll { flex: 1; min-height: 0; overflow: hidden; margin-top: 4px; display: flex; flex-direction: column; }
.thumbs { list-style: none; margin-top: -43.200px; display: flex; flex-direction: column; gap: 8.900px; }
.thumbs li { height: 48.300px; flex: none; display: flex; align-items: flex-end; }
.thumbs li > span { width: 13px; text-align: center; font-size: 7.600px; line-height: 10px; color: #666; }
.thumbs svg { width: 86px; height: 48.300px; border-radius: 2.500px; box-shadow: 0 0 1px rgba(0,0,0,.2); font-family: "Noto Sans", "Noto Sans CJK SC", sans-serif; }
.thumbs .active svg { box-shadow: 0 0 0 1.300px #3478e8; }
.thumbs .active span { font-weight: 600; color: #333; }
.canvas { flex: 1; min-width: 0; position: relative; display: flex; flex-direction: column; padding-top: 26px; }
.mode { position: absolute; right: 6px; top: 6px; width: 83px; height: 16px; border-radius: 3px; background: #fff; box-shadow: 0 0 3px rgba(0,0,0,.1); display: flex; align-items: center; padding: 0 6px 0 8px; gap: 2.500px; font-size: 6.700px; color: #333; }
.toggle { width: 13px; height: 7px; border-radius: 4px; background: #2b6fe6; margin-left: auto; display: flex; justify-content: flex-end; padding: 1px; }
.toggle::after { content: ""; width: 5px; height: 5px; border-radius: 50%; background: #fff; }

/* slide */
.slide { margin-left: 11px; width: 639.500px; height: 359.500px; flex: none; background: #fff; box-shadow: 0 2px 6px rgba(0,0,0,.13); padding: 18px 34px 0 33.500px; display: flex; flex-direction: column; color: #454958; }
.chapter { height: 14px; line-height: 14px; font-size: 8.200px; color: #66667c; }
.slide h2 { margin-top: 2px; height: 26px; line-height: 26px; font-size: 18.650px; color: #17304d; font-weight: 700; }
.rule { margin-top: 3px; height: 2px; background: linear-gradient(#d8dce2 1px, transparent 1px); }
.rule i { display: block; width: 96px; height: 2px; background: linear-gradient(90deg, #2e75a8 5px, #17304d 5px); }
.layer { margin-top: 6.500px; height: 11px; line-height: 11px; font-size: 8.720px; font-weight: 700; color: #17304d; margin-bottom: 4.500px; flex: none; }
.layer em { font-weight: 400; margin: 0 2.200px; }
.row { display: grid; grid-template-columns: 277px 276.500px; justify-content: space-between; height: 79.500px; flex: none; }
.row + .layer { margin-top: 9px; }
.layer.blue { color: #2e75a8; }
.card { border: 1px solid #e1e5ea; border-left: 3.500px solid #17304d; padding: 3px 9.500px 0 7.500px; display: flex; flex-direction: column; }
.lower .card { border-left-color: #2e6f9f; }
.card h3 { height: 14px; line-height: 14px; font-size: 9.700px; font-weight: 700; color: #17304d; flex: none; }
.card h3 .n { font-weight: 500; }
.mid-area { height: 42px; display: flex; flex: none; }
.card small { color: #74748c; font-size: 6.650px; line-height: 8px; display: block; }
.card p { height: 11px; line-height: 11px; font-size: 7.300px; }
.card p b { color: #17304d; }
.lower .card p b { color: #2e75a8; }
.chart { align-items: flex-end; }
.col { width: 40px; display: flex; flex-direction: column; align-items: center; font-size: 8.400px; line-height: 12px; color: #66667f; }
.col i { width: 26.500px; }
.weak { margin-left: 42.500px; }
.weak span { font-weight: 500; }
.weak i { height: 3.500px; background: #6a6882; margin-bottom: 1px; }
.strong { margin-left: 69px; color: #2e75a8; }
.strong i { height: 19px; background: #2e6f9f; margin-bottom: 1px; }
.card .strong small { color: #2e75a8; font-weight: 700; }
.times { margin-left: 4px; }
.times b { display: block; font-size: 13.400px; line-height: 16px; color: #2e75a8; }
.card .times small { font-size: 6px; }
.boxes { padding-top: 6px; gap: 9.700px; }
.boxes > div { flex: 1; height: 30px; background: #f4f6f8; text-align: center; padding-top: 2px; }
.boxes b { display: block; font-size: 15.800px; line-height: 17px; color: #17304d; }
.two { gap: 14.500px; }
.two > div { border-left: 3px solid #2e6f9f; }
.two b { font-size: 18.400px; line-height: 18px; color: #2e6f9f; }
.two > div { padding-top: 1px; }
.card .two small { font-size: 7.250px; line-height: 9px; }
.weeks { justify-content: space-between; }
.wk { padding-top: 9px; }
.wk b { display: block; font-size: 18px; line-height: 19px; color: #2e6f9f; }
.card .wk small { line-height: 9px; }
.tl-box { width: 160.500px; margin-right: 4.500px; padding-top: 17px; text-align: center; }
.ticks { height: 10px; display: flex; justify-content: space-between; background: linear-gradient(transparent 3.500px, #f0f2f5 3.500px, #f0f2f5 6.500px, transparent 6.500px); margin-bottom: 1px; }
.ticks i { width: 1px; background: #2e75a8; }
.card .tl-box small { font-size: 6.100px; }
.bound { margin-top: 6px; height: 54.500px; flex: none; background: #f4f6f7; border-left: 4px solid #66688a; padding: 0 0 0 7px; display: flex; font-size: 7.560px; }
.bound b { color: #17304d; }
.bt { width: 52.700px; font-size: 8.300px; line-height: 18px; }
.bound p { height: 17.400px; line-height: 15.500px; }
.slide footer { margin-top: 6.500px; border-top: 1px solid #dce1e6; display: flex; justify-content: space-between; font-size: 6.750px; line-height: 14px; color: #7b7e88; }
.notes { margin-top: 27.500px; flex: 1; border-top: 1px solid #e6e8eb; padding: 7.500px 0 0 13.500px; font-size: 8px; line-height: 13px; color: #a3a5a8; }
.status { height: 18px; flex: none; background: #fff; border-top: 1px solid #e6e8ea; display: flex; align-items: center; padding: 0 12px 0 10px; font-size: 6.650px; color: #666; }
.status > span:first-child { color: #333; }
.on { width: 13px; height: 13px; margin-left: 10px; border-radius: 2px; background: #eeeff0; display: flex; align-items: center; justify-content: center; }
.status .sep { margin: 0 7.500px; height: 8px; }
.status .sep + .ic { margin: 0 1.500px 0 2px; }
.status b { font-size: 6.900px; margin: 0 6.500px; font-weight: 600; }
.status .zo { margin-left: 9.500px; }
```
